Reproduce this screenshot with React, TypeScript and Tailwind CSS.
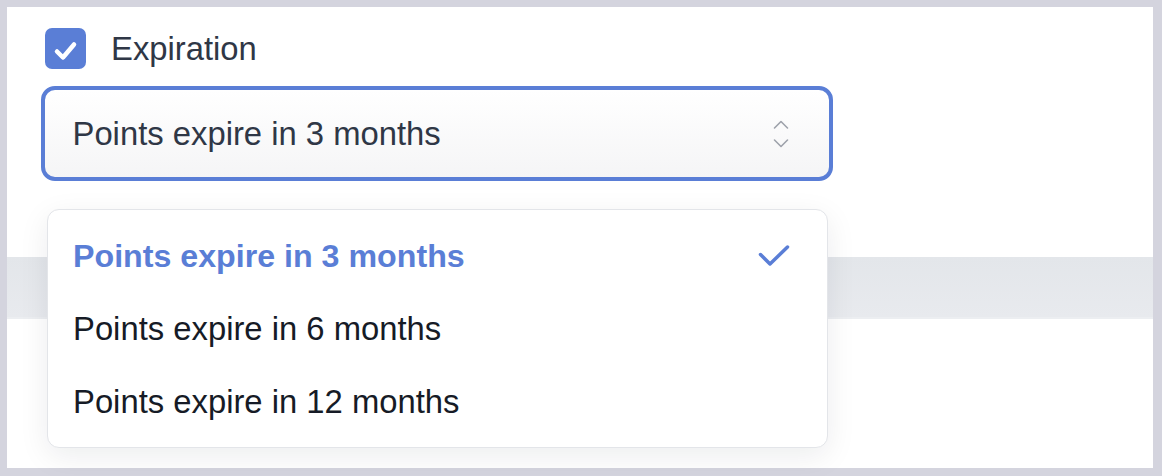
const options = [
  "Points expire in 3 months",
  "Points expire in 6 months",
  "Points expire in 12 months",
];

function UpDownIcon() {
  return (
    <svg width="16" height="28" viewBox="0 0 16 28" fill="none" stroke="#9ea2ab" strokeWidth="1.6" strokeLinecap="round" strokeLinejoin="round">
      <path d="M1.5 8 L8 1.5 L14.5 8" />
      <path d="M1.5 20 L8 26.5 L14.5 20" />
    </svg>
  );
}

function CheckMark() {
  return (
    <svg width="32" height="22" viewBox="0 0 32 22" fill="none" stroke="#5a7ed6" strokeWidth="3.5" strokeLinecap="round" strokeLinejoin="round">
      <path d="M2.5 9.5 L12 19 L29.5 2" />
    </svg>
  );
}

export default function App() {
  const selected = options[0];
  return (
    <div className="h-[476px] w-[1162px] bg-[#d4d4de] pt-[7px] pb-[8px] pl-[7px] pr-[9px] font-['Liberation_Sans',Arial,sans-serif]">
      <div className="relative flex h-full flex-col bg-white">
        <div className="flex flex-col pl-[34px] pt-[21px]">
          <div className="flex items-center gap-[25px] pl-[4px]">
            <div className="flex h-[41px] w-[41px] items-center justify-center rounded-[7px] bg-[#5a7ed6]">
              <svg width="41" height="41" viewBox="0 0 41 41" fill="none" stroke="white" strokeWidth="4.5" strokeLinecap="round" strokeLinejoin="round">
                <path d="M12 23.5 L18 29.5 L29 16.5" />
              </svg>
            </div>
            <span className="pt-[2px] text-[32.8px] leading-none text-[#2f3746]">Expiration</span>
          </div>
          <button className="mt-[17px] flex h-[95px] w-[792px] items-center justify-between rounded-[14px] border-[4.5px] border-[#5a7ed6] bg-linear-to-b from-white to-[#f5f5f6] pl-[27.5px] pr-[40px] text-left">
            <span className="pt-[1px] text-[32.8px] leading-none text-[#2f3746]">{selected}</span>
            <UpDownIcon />
          </button>
        </div>
        <div className="mt-[76px] h-[62px] border-b-[2px] border-[#eceef1] bg-linear-to-b from-[#e3e6ea] to-[#e8eaee]" />
        <div className="flex-1 bg-white" />

        <ul className="absolute left-[40px] top-[202px] w-[781px] rounded-[12px] border border-[#e3e5e9] bg-white py-[9px] shadow-[0_8px_30px_rgba(15,23,42,0.08)]">
          {options.map((opt) => {
            const active = opt === selected;
            return (
              <li key={opt} className="flex h-[73px] items-center justify-between pl-[25px] pr-[37px]">
                <span className={active ? "pt-[2px] text-[32.2px] font-bold leading-none text-[#5a7ed6]" : "pt-[2px] text-[32.8px] leading-none text-[#161b26]"}>
                  {opt}
                </span>
                {active && <CheckMark />}
              </li>
            );
          })}
        </ul>
      </div>
    </div>
  );
}
